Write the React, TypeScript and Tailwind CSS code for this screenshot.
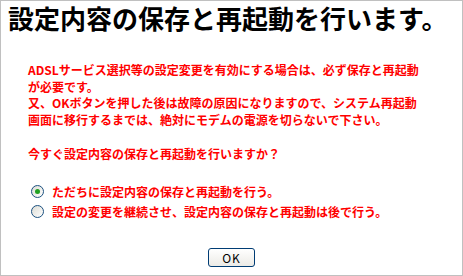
import { useState } from "react";

const jp = "font-['MS_UI_Gothic','Noto_Sans_CJK_JP',sans-serif]";

function Radio({ checked, onClick }: { checked: boolean; onClick: () => void }) {
    return (
        <span
            onClick={onClick}
            className="flex h-[13px] w-[13px] shrink-0 items-center justify-center rounded-full border border-[#1c5180] bg-gradient-to-br from-[#dcdcd5] to-[#ffffff]"
        >
            {checked && <span className="h-[5px] w-[5px] rounded-full bg-[#21a121]" />}
        </span>
    );
}

export default function App() {
    const [choice, setChoice] = useState(0);

    const options = [
        "ただちに設定内容の保存と再起動を行う。",
        "設定の変更を継続させ、設定内容の保存と再起動は後で行う。",
    ];

    return (
        <div className={`box-border h-[276px] w-[463px] border border-[#c0c0c0] bg-white ${jp}`}>
            {/* Title */}
            <h1 className="whitespace-nowrap pl-[7px] pt-[3px] text-[26px] font-bold leading-[28px] text-black">
                設定内容の保存と再起動を行います。
            </h1>

            {/* Warning */}
            <div className="mt-[30px] whitespace-nowrap pl-[27px] text-[12px] font-bold leading-[16.5px] text-[#ff0000]">
                <p>
                    ADSLサービス選択等の設定変更を有効にする場合は、必ず保存と再起動
                    <br />
                    が必要です。
                </p>
                <p>
                    又、OKボタンを押した後は故障の原因になりますので、システム再起動
                    <br />
                    画面に移行するまでは、絶対にモデムの電源を切らないで下さい。
                </p>
                <p className="mt-[18px]">今すぐ設定内容の保存と再起動を行いますか？</p>
            </div>

            {/* Options */}
            <div className="mt-[19px] flex flex-col pl-[30px]">
                {options.map((label, i) => (
                    <label key={i} className="flex h-[20px] items-center gap-[8px]" onClick={() => setChoice(i)}>
                        <Radio checked={choice === i} onClick={() => setChoice(i)} />
                        <span className="whitespace-nowrap text-[12px] font-bold leading-[16px] text-[#ff0000]">{label}</span>
                    </label>
                ))}
            </div>

            <div className="mt-[26px] flex justify-center">
                <button className="h-[19px] w-[47px] rounded-[3px] border border-[#003c74] bg-gradient-to-b from-[#ffffff] to-[#ecebe6] text-[12px] leading-[17px] tracking-[1px] text-black">
                    OK
                </button>
            </div>
        </div>
    );
}
